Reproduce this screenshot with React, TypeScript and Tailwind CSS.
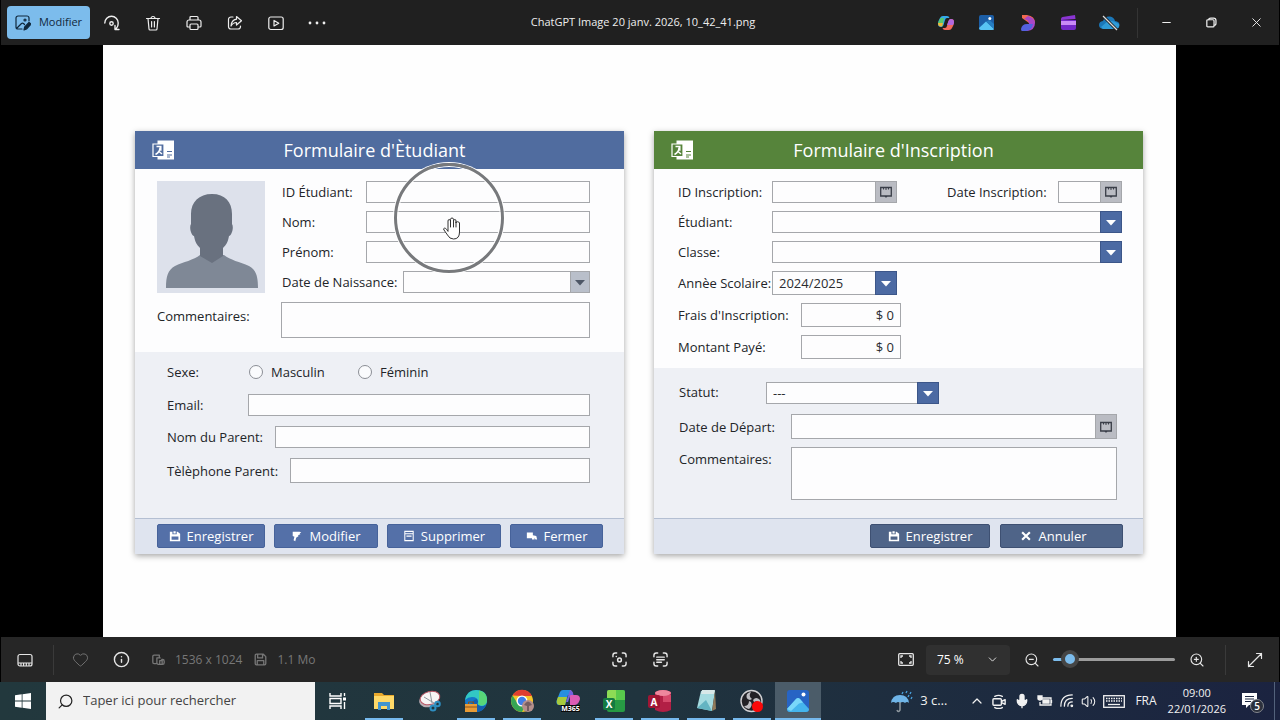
import type { ReactNode } from "react";
import { ChevronDown, ChevronUp, Info, Heart, Mic, Minus, Search, Volume2, X, ZoomIn, ZoomOut } from "lucide-react";

const FIELD = "block min-w-0 border border-[#a5a7ab] bg-[#fdfdfe] px-1.5 text-[13px] text-[#2a2c30] outline-none";

/* ---------- Champs ---------- */

function Row({ id, label, labelClass, className = "", children }: {
  id: string;
  label: string;
  labelClass: string;
  className?: string;
  children: ReactNode;
}) {
  return (
    <div className={`flex items-center ${className}`}>
      <label htmlFor={id} className={`shrink-0 whitespace-nowrap ${labelClass}`}>
        {label}
      </label>
      {children}
    </div>
  );
}

function TextField({ id, className = "h-[22px] flex-1", value = "" }: { id: string; className?: string; value?: string }) {
  return <input id={id} type="text" defaultValue={value} className={`${FIELD} ${className}`} />;
}

function SelectField({ id, options = [""], gray = false, className = "h-[22px] flex-1" }: {
  id: string;
  options?: string[];
  gray?: boolean;
  className?: string;
}) {
  return (
    <div className={`relative min-w-0 ${className}`}>
      <select id={id} className={`${FIELD} h-full w-full appearance-none`}>
        {options.map((o) => (
          <option key={o}>{o}</option>
        ))}
      </select>
      <span
        className={`pointer-events-none absolute inset-y-0 right-0 flex items-center justify-center ${
          gray ? "w-5 border border-[#a5a7ab] bg-[#b9bfca] text-[#4d5665]" : "w-[22px] border border-[#3c5689] bg-[#4c6aa3] text-white"
        }`}
      >
        <svg width="12" height="7" viewBox="0 0 12 7" fill="currentColor">
          <path d="M1 1h10L6 6.500z" />
        </svg>
      </span>
    </div>
  );
}

function DateField({ id, className = "h-[22px] flex-1" }: { id: string; className?: string }) {
  return (
    <div className={`flex min-w-0 ${className}`}>
      <input id={id} type="text" className={`${FIELD} w-full border-r-0`} />
      <button type="button" aria-label="Choisir" className="flex w-[22px] shrink-0 items-center justify-center border border-[#a5a7ab] bg-[#babcc3]">
        <svg width="12" height="12" viewBox="0 0 12 12" fill="none" stroke="#3a3e48">
          <path d="M.7 1.500h10.600v8.500H.7z" strokeWidth="1.300" />
          <path d="M3.500 1v2.500M8.500 1v2.500M5 3h2" />
          <path d="M4.500 10h3L6 12z" fill="#3a3e48" stroke="none" />
        </svg>
      </button>
    </div>
  );
}

/* ---------- Fenêtres ---------- */

function FormCard({ title, headClass, children }: { title: string; headClass: string; children: ReactNode }) {
  return (
    <form className="flex flex-col bg-[#fdfdfe] text-[13px] leading-5 text-[#222428] shadow-[0_2px_6px_rgba(0,0,0,0.35)]">
      <header className={`grid h-[38px] grid-cols-[60px_1fr_70px] items-center ${headClass}`}>
        <svg className="ml-[17px]" width="22" height="20" viewBox="0 0 22 20">
          <path d="M5.500 .5H22v19H5.500z" fill="#fff" />
          <path d="M1 4h11v12.500H1z" fill="currentColor" stroke="#fff" strokeWidth="1.200" />
          <path d="M4.500 6.500h4.300v4.300M8 7.500Q8 12 3.500 14.500M7 11.500l3 2.500" fill="none" stroke="#fff" strokeWidth="1.500" />
          <path d="M15 11.500h5M15 15h5M15 17h3" stroke="currentColor" strokeWidth="1.200" />
        </svg>
        <h2 className="text-center text-lg whitespace-nowrap text-white">{title}</h2>
      </header>
      {children}
    </form>
  );
}

function ActionButton({ label, className, children }: { label: string; className: string; children: ReactNode }) {
  return (
    <button type="button" className={`flex h-6 items-center justify-center gap-1.5 rounded-xs border text-[13px] font-medium text-white ${className}`}>
      <svg width="12" height="12" viewBox="0 0 14 14" fill="#fff">
        {children}
      </svg>
      {label}
    </button>
  );
}

const BLUE = "border-[#46629a] bg-[#5470a8]";
const SLATE = "border-[#3e5072] bg-[#4f6488]";
const SAVE_PATH = "M1 2h3v3h5V2h1l3 2.500V13H1zM5.200 1.500h2.600V4H5.200zM3 7.500v4h8v-4z";

function StudentForm() {
  return (
    <FormCard title="Formulaire d'Ètudiant" headClass="bg-[#506c9f] text-[#506c9f]">
      <div className="pt-3 pr-[34px] pb-[14px] pl-[22px]">
        <div className="flex gap-[17px]">
          <svg className="shrink-0 bg-[#dde1eb]" width="108" height="112" viewBox="0 0 108 112">
            <path d="M9 107c0-12 2-18 9-22 8-4 19-6 25-11h24c6 5 16 7 25 11 7 4 9 10 9 22z" fill="#7f8896" />
            <path d="M55 13c13 0 20 8 20 20v10c2 3 0 11-3 12-1 6-3 9-6 12v8L55 82l-12-7v-8c-3-3-5-6-6-12-3-1-5-9-3-12V33c0-12 8-20 21-20z" fill="#69717f" />
          </svg>
          <div className="flex min-w-0 flex-1 flex-col gap-2">
            <Row id="sid" label="ID Étudiant:" labelClass="w-[84px]">
              <TextField id="sid" />
            </Row>
            <Row id="nom" label="Nom:" labelClass="w-[84px]">
              <TextField id="nom" />
            </Row>
            <Row id="prenom" label="Prénom:" labelClass="w-[84px]">
              <TextField id="prenom" />
            </Row>
            <Row id="naissance" label="Date de Naissance:" labelClass="w-[121px]">
              <SelectField id="naissance" gray />
            </Row>
          </div>
        </div>
        <Row id="scom" label="Commentaires:" labelClass="w-[124px] self-start pt-1" className="mt-[9px]">
          <textarea id="scom" className={`${FIELD} h-9 flex-1 resize-none`} />
        </Row>
      </div>
      <div className="flex flex-1 flex-col gap-[10px] bg-[#eef0f5] pt-[10px] pr-[34px] pb-[35px] pl-8">
        <fieldset className="flex h-[22px] items-center">
          <legend className="float-left w-[82px]">Sexe:</legend>
          <label className="flex w-[109px] items-center gap-2">
            <input type="radio" name="sexe" className="size-[14px] appearance-none rounded-full border border-[#8b8e95] bg-[#fafbfd]" />
            Masculin
          </label>
          <label className="flex items-center gap-2">
            <input type="radio" name="sexe" className="size-[14px] appearance-none rounded-full border border-[#8b8e95] bg-[#fafbfd]" />
            Féminin
          </label>
        </fieldset>
        <Row id="email" label="Email:" labelClass="w-[81px]">
          <TextField id="email" />
        </Row>
        <Row id="parent" label="Nom du Parent:" labelClass="w-[108px]">
          <TextField id="parent" />
        </Row>
        <Row id="tel" label="Tèlèphone Parent:" labelClass="w-[123px]">
          <TextField id="tel" className="h-[25px] flex-1" />
        </Row>
      </div>
      <footer className="flex h-9 items-center gap-[9px] border-t border-[#b4bfd2] bg-[#dfe4ef] pb-0.5 pl-[22px]">
        <ActionButton label="Enregistrer" className={`w-[108px] ${BLUE}`}>
          <path fillRule="evenodd" d={SAVE_PATH} />
        </ActionButton>
        <ActionButton label="Modifier" className={`w-[104px] ${BLUE}`}>
          <path d="M2 2h8l2 1-2 1 1 1-3 1 1 1-3 2-1 4-2-1 1-4-2-1z" />
        </ActionButton>
        <ActionButton label="Supprimer" className={`w-[114px] ${BLUE}`}>
          <path fillRule="evenodd" d="M1.500 1h11v12h-11zM2.700 2.200v1.600h8.600V2.200zM2.700 5v6.800h8.600V5zM4 6.500h6V8H4z" />
        </ActionButton>
        <ActionButton label="Fermer" className={`w-[93px] ${BLUE}`}>
          <path d="M1 3h7v3l4 1 1 4h-2l-1-2v2H7V9.500H1z" />
        </ActionButton>
      </footer>
    </FormCard>
  );
}

function InscriptionForm() {
  return (
    <FormCard title="Formulaire d'Inscription" headClass="bg-[#56843b] text-[#56843b]">
      <div className="flex flex-col gap-2 pt-3 pr-[21px] pb-[9px] pl-6">
        <div className="flex justify-between">
          <Row id="iid" label="ID Inscription:" labelClass="w-[94px]">
            <DateField id="iid" className="h-[22px] w-[125px]" />
          </Row>
          <Row id="idate" label="Date Inscription:" labelClass="w-[111px]">
            <DateField id="idate" className="h-[22px] w-16" />
          </Row>
        </div>
        <Row id="etudiant" label="Étudiant:" labelClass="w-[94px]">
          <SelectField id="etudiant" />
        </Row>
        <Row id="classe" label="Classe:" labelClass="w-[94px]">
          <SelectField id="classe" />
        </Row>
        <Row id="annee" label="Annèe Scolaire:" labelClass="w-[94px]">
          <SelectField id="annee" options={["2024/2025"]} className="h-6 w-[125px]" />
        </Row>
        <Row id="frais" label="Frais d'Inscription:" labelClass="w-[123px]">
          <TextField id="frais" value="$ 0" className="h-6 w-[100px] text-right" />
        </Row>
        <Row id="montant" label="Montant Payé:" labelClass="w-[123px]">
          <TextField id="montant" value="$ 0" className="h-6 w-[100px] text-right" />
        </Row>
      </div>
      <div className="flex flex-1 flex-col bg-[#eef0f5] pt-[14px] pr-[26px] pb-[18px] pl-[25px]">
        <Row id="statut" label="Statut:" labelClass="w-[87px] self-start">
          <SelectField id="statut" options={["---"]} className="h-[22px] w-[173px]" />
        </Row>
        <Row id="depart" label="Date de Départ:" labelClass="w-28" className="mt-[10px]">
          <DateField id="depart" className="h-[25px] flex-1" />
        </Row>
        <Row id="icom" label="Commentaires:" labelClass="w-28 self-start pt-0.5" className="mt-2">
          <textarea id="icom" className={`${FIELD} h-[53px] flex-1 resize-none`} />
        </Row>
      </div>
      <footer className="flex h-9 items-center justify-end gap-[10px] border-t border-[#b4bfd2] bg-[#dfe4ef] pr-5 pb-0.5">
        <ActionButton label="Enregistrer" className={`w-[120px] ${SLATE}`}>
          <path fillRule="evenodd" d={SAVE_PATH} />
        </ActionButton>
        <ActionButton label="Annuler" className={`w-[123px] pr-4 ${SLATE}`}>
          <path d="M2.500 2.500l9 9M11.500 2.500l-9 9" stroke="#fff" strokeWidth="2.500" />
        </ActionButton>
      </footer>
    </FormCard>
  );
}

/* ---------- Visionneuse ---------- */

function IconButton({ label, className = "w-[41px]", children }: { label: string; className?: string; children: ReactNode }) {
  return (
    <button type="button" aria-label={label} className={`flex h-full shrink-0 items-center justify-center ${className}`}>
      {children}
    </button>
  );
}

function Line({ children, size = 16 }: { children: ReactNode; size?: number }) {
  return (
    <svg width={size} height={size} viewBox="0 0 16 16" fill="none" stroke="currentColor" strokeWidth="1.200" strokeLinecap="round" strokeLinejoin="round">
      {children}
    </svg>
  );
}

function TopBar() {
  return (
    <header className="flex h-[45px] border-x border-black bg-[#202020] text-[#eeeeee]">
      <div className="flex flex-1 items-center pl-1.5">
        <button type="button" className="mr-px flex h-[33px] w-[83px] items-center justify-center gap-2 rounded bg-[#7cbcec] text-[11px] text-[#10283c]">
          <Line>
            <path d="M14 6V3a2 2 0 0 0-2-2H3a2 2 0 0 0-2 2v9a2 2 0 0 0 2 2h4M2 13l4.500-4.500a1.500 1.500 0 0 1 2 0L9.500 9.500" />
            <circle cx="10" cy="5" r="1" />
            <path d="M9 15l.7-3L14 7.500 16 9l-4.500 5z" fill="currentColor" />
          </Line>
          Modifier
        </button>
        <IconButton label="Faire pivoter">
          <Line>
            <path d="M.8 8A6.700 6.700 0 0 1 14.200 8Q14.500 11 12 14M11 10.500v4h4" strokeWidth="1.400" />
            <circle cx="7.500" cy="8.500" r="1.700" strokeWidth="1.400" />
          </Line>
        </IconButton>
        <IconButton label="Supprimer l'image">
          <Line>
            <path d="M1.500 3.500h13M3 3.500l1 10.500q.1 1 1 1h6q.9 0 1-1l1-10.500M6 3.500a2 2 0 0 1 4 0M6.600 6.500v5.500M9.400 6.500v5.500" />
          </Line>
        </IconButton>
        <IconButton label="Imprimer">
          <Line>
            <path d="M4 5V2.500q0-1 1-1h6q1 0 1 1V5M4 12H2q-1 0-1-1V7a2 2 0 0 1 2-2h10a2 2 0 0 1 2 2v4q0 1-1 1h-2M5 9h6q1 0 1 1v3.500q0 1-1 1H5q-1 0-1-1V10q0-1 1-1z" />
          </Line>
        </IconButton>
        <IconButton label="Partager">
          <Line>
            <path d="M6 2H4a2.500 2.500 0 0 0-2.500 2.500v7A2.500 2.500 0 0 0 4 14h7a2.500 2.500 0 0 0 2.500-2.500V11M9.500 1.500l5 4.200-5 4.300V7.500Q6 7.500 4 11q.5-6 5.500-6.800z" />
          </Line>
        </IconButton>
        <IconButton label="Diaporama">
          <Line>
            <rect x=".8" y="2" width="14.400" height="12.500" rx="2" />
            <path d="M6 5.500v5.500l4.800-2.700z" />
          </Line>
        </IconButton>
        <IconButton label="Plus">
          <svg width="18" height="4" viewBox="0 0 18 4" fill="currentColor">
            <circle cx="2" cy="2" r="1.400" />
            <circle cx="9" cy="2" r="1.400" />
            <circle cx="16" cy="2" r="1.400" />
          </svg>
        </IconButton>
      </div>
      <h1 className="self-center text-[11px] whitespace-nowrap">ChatGPT Image 20 janv. 2026, 10_42_41.png</h1>
      <div className="flex flex-1 items-center justify-end">
        <IconButton label="Copilot">
          <svg width="16" height="16" viewBox="0 0 16 16">
            <path d="M5 1h4q2 0 2.500 2H9Q7.500 3 7 5L5.500 10Q5 12 3 12 0 12 0 9q0-3 2-6 .8-2 3-2z" fill="#35a9ea" />
            <path d="M1 6q1-3 2-3h3L4.500 11H3Q0 11 0 8z" fill="#58c96b" />
            <path d="M0 8h5l-1 3.500H3Q0 11.500 0 8z" fill="#f0b63a" />
            <path d="M11 15H7q-2 0-2.500-2H7q1.500 0 2-2l1.500-5Q11 4 13 4q3 0 3 3t-2 6q-.8 2-3 2z" fill="#f2695c" />
            <path d="M10.500 6Q11 4 13 4q3 0 3 3 0 2-1 3H9z" fill="#b268e0" />
          </svg>
        </IconButton>
        <IconButton label="Photos">
          <svg width="15" height="15" viewBox="0 0 15 15">
            <rect width="15" height="15" rx="2" fill="#1c5ea6" />
            <path d="M0 13l7-6.500L15 14q0 1-2 1H2q-2 0-2-2z" fill="#58c4f4" />
            <path d="M7 6.500L15 14V9l-4.500-4z" fill="#267ec2" />
            <circle cx="10.800" cy="3.500" r="1.500" fill="#fff" />
          </svg>
        </IconButton>
        <IconButton label="Designer">
          <svg width="16" height="16" viewBox="0 0 16 16">
            <path d="M2 0h5q8 1 8 8H9L2 3z" fill="#f26a50" />
            <path d="M8 1q7 2 7 7 0 7-8 8H4q5-4 5-7Q9 5 4 4z" fill="#a846c8" />
            <path d="M1 14q1-5 6-5h6q-1 6-7 7H2q-1 0-1-2z" fill="#5361e0" />
          </svg>
        </IconButton>
        <IconButton label="Clipchamp">
          <svg width="15" height="15" viewBox="0 0 15 15">
            <path d="M0 4q0-1.500 1.500-2L14 0l.5 4L0 5z" fill="#8a35d2" />
            <path d="M0 5h15v8q0 2-2 2H2q-2 0-2-2z" fill="#7428c8" />
            <path d="M0 6h15v4H0z" fill="#c98af6" />
          </svg>
        </IconButton>
        <IconButton label="OneDrive">
          <svg width="21" height="16" viewBox="0 0 21 16">
            <path d="M4 14q-4-.5-4-4t4-4Q6 1 11 1.500q4 .5 5 4.500 4.500.5 4.500 4t-4 4z" fill="#1b77b8" />
            <path d="M2 12l7-6q5-1 11 3 1 5-4 5H4z" fill="#2f9ad6" />
            <path d="M4 1l14 14" stroke="#202020" strokeWidth="3" />
            <path d="M4 1l14 14" stroke="#ddd" strokeWidth="1.200" />
          </svg>
        </IconButton>
        <span className="mr-1.5 ml-[7px] h-[30px] w-px bg-[#343434]" />
        <IconButton label="Réduire" className="w-[45px]">
          <Minus size={13} strokeWidth={2} />
        </IconButton>
        <IconButton label="Niveau inférieur" className="w-[45px]">
          <Line size={11}>
            <rect x="1.200" y="4" width="10.500" height="10.500" rx="1.500" strokeWidth="1.800" />
            <path d="M4 4q0-2.500 3-2.500h4q3.500 0 3.500 3.500v4q0 3-2.500 3" strokeWidth="1.800" />
          </Line>
        </IconButton>
        <IconButton label="Fermer la fenêtre" className="w-[45px]">
          <X size={15} strokeWidth={1.5} />
        </IconButton>
      </div>
    </header>
  );
}

function ViewerBar() {
  return (
    <footer className="flex h-[45px] items-center border-x border-black bg-[#262626] text-[#e6e6e6]">
      <div className="flex h-full flex-1 items-center">
        <IconButton label="Pellicule" className="w-12">
          <Line>
            <rect x="1" y="2.500" width="14" height="11.500" rx="2" />
            <path d="M1.500 11h13M4 11.500v2M6.600 11.500v2M9.300 11.500v2M12 11.500v2" />
          </Line>
        </IconButton>
        <span className="mr-[6px] ml-1 h-[30px] w-px bg-[#3a3a3a]" />
        <IconButton label="Favori">
          <Heart size={17} strokeWidth={1.3} className="text-[#777777]" />
        </IconButton>
        <IconButton label="Informations">
          <Info size={17} strokeWidth={2} />
        </IconButton>
        <div className="ml-[10px] flex items-center gap-[10px] text-xs text-[#777777]">
          <Line size={13}>
            <path d="M5 13H2.500q-1.500 0-1.500-1.500V4q0-1.500 1.500-1.500H9v3M6 6h4M12 8h1q2 0 2 2v2q0 2-2 2H8q-2 0-2-2V6M9.500 14V9.500h3V14" strokeWidth="1.600" />
          </Line>
          1536 x 1024
        </div>
        <div className="ml-3 flex items-center gap-[10px] text-xs text-[#777777]">
          <Line size={13}>
            <path d="M1.500 3q0-1.500 1.500-1.500h8.500l3 3V13q0 1.500-1.500 1.500H3q-1.500 0-1.500-1.500zM4.500 2v4h6V2M4 14V9.500h8V14" strokeWidth="1.600" />
          </Line>
          1.1 Mo
        </div>
      </div>
      <IconButton label="Recherche visuelle">
        <Line size={15}>
          <path d="M1 5V3.500Q1 1 3.500 1H5M11 1h1.500Q15 1 15 3.500V5M15 11v1.500q0 2.500-2.500 2.500H11M5 15H3.500Q1 15 1 12.500V11" strokeWidth="1.500" />
          <circle cx="8" cy="8.500" r="2" strokeWidth="1.600" />
          <path d="M4.500 4.800h.1" strokeWidth="1.600" />
        </Line>
      </IconButton>
      <IconButton label="Numériser le texte">
        <Line size={15}>
          <path d="M1 5V3.500Q1 1 3.500 1H5M11 1h1.500Q15 1 15 3.500V5M15 11v1.500q0 2.500-2.500 2.500H11M5 15H3.500Q1 15 1 12.500V11M4 5.500h8M4 8.200h8M4 11h5" strokeWidth="1.500" />
        </Line>
      </IconButton>
      <div className="flex h-full flex-1 items-center justify-end">
        <IconButton label="Ajuster">
          <svg width="16" height="13" viewBox="0 0 16 13" fill="none" stroke="currentColor" strokeWidth="1.300">
            <rect x=".7" y=".7" width="14.600" height="11.600" rx="1" />
            <path d="M3 5V3h2M11 3h2v2M13 8v2h-2M5 10H3V8" />
          </svg>
        </IconButton>
        <button type="button" className="flex h-[30px] w-[84px] items-center justify-between rounded bg-[#303030] px-[11px] text-xs text-white">
          75 %
          <ChevronDown size={13} strokeWidth={1.5} />
        </button>
        <IconButton label="Zoom arrière" className="w-[43px]">
          <ZoomOut size={16} strokeWidth={1.7} />
        </IconButton>
        <input
          type="range"
          aria-label="Zoom"
          defaultValue={8}
          className="h-[18px] w-[122px] appearance-none bg-transparent [&::-webkit-slider-runnable-track]:h-[3px] [&::-webkit-slider-runnable-track]:rounded-full [&::-webkit-slider-runnable-track]:bg-[linear-gradient(to_right,#7cbcec_14%,#9c9c9c_14%)] [&::-webkit-slider-thumb]:-mt-[8px] [&::-webkit-slider-thumb]:size-[18px] [&::-webkit-slider-thumb]:appearance-none [&::-webkit-slider-thumb]:rounded-full [&::-webkit-slider-thumb]:border-4 [&::-webkit-slider-thumb]:border-[#454545] [&::-webkit-slider-thumb]:bg-[#7cbcec]"
        />
        <IconButton label="Zoom avant" className="w-[43px]">
          <ZoomIn size={16} strokeWidth={1.7} />
        </IconButton>
        <span className="mr-1 ml-[7px] h-[30px] w-px bg-[#3a3a3a]" />
        <IconButton label="Plein écran" className="w-[49px]">
          <Line>
            <path d="M9.500 1.500h5v5M14.500 1.500l-13 13M1.500 9.500v5h5" />
          </Line>
        </IconButton>
      </div>
    </footer>
  );
}

/* ---------- Barre des tâches ---------- */

function TaskButton({ label, open = true, active = false, children }: { label: string; open?: boolean; active?: boolean; children: ReactNode }) {
  return (
    <button
      type="button"
      aria-label={label}
      className={`flex h-full w-[46px] shrink-0 flex-col items-center justify-between pt-[7px] ${active ? "bg-[#4b5c69]" : ""}`}
    >
      <svg width="24" height="24" viewBox="0 0 24 24">
        {children}
      </svg>
      {open && <span className={`h-0.5 bg-[#76b9ed] ${active ? "w-full" : "w-[38px]"}`} />}
    </button>
  );
}

function Taskbar() {
  return (
    <nav className="flex h-[38px] items-center bg-linear-to-r from-[#22383d] via-[#20343e] to-[#1b2340] text-[#f2f2f2]">
      <button type="button" aria-label="Démarrer" className="flex w-[46px] shrink-0 justify-center">
        <svg width="16" height="16" viewBox="0 0 16 16" fill="#fff">
          <path d="M0 2.300l6.700-1v6.300H0zM7.500 1.200L16 0v7.600H7.500zM0 8.400h6.700v6.300l-6.700-1zM7.500 8.400H16V16l-8.500-1.200z" />
        </svg>
      </button>
      <div className="flex h-full w-[269px] shrink-0 items-center gap-[9px] bg-[#f2f2f2] pl-[11px] text-[#3a3a3a]">
        <Search size={17} strokeWidth={1.7} className="-scale-x-100 text-[#222222]" />
        <input type="search" aria-label="Rechercher" placeholder="Taper ici pour rechercher" className="min-w-0 flex-1 bg-transparent text-[13px] outline-none placeholder:text-[#444444]" />
      </div>
      <TaskButton label="Vue des tâches" open={false}>
        <path d="M4 4v3h11V4M4 20v-3h11v3M4 9.500h11v5H4zM18.500 4v3M18.500 13v7" fill="none" stroke="#fff" strokeWidth="1.400" />
        <path d="M17 8.500h3v3h-3z" fill="#fff" />
      </TaskButton>
      <TaskButton label="Explorateur de fichiers">
        <path d="M2 4h8l2 2h10v14H2z" fill="#e9a92c" />
        <path d="M2 7h20v13H2z" fill="#ffd968" />
        <path d="M6 13h12v8h-3v-4H9v4H6z" fill="#4295cf" />
      </TaskButton>
      <TaskButton label="Outil Capture" open={false}>
        <ellipse cx="11" cy="11" rx="10" ry="7" fill="#b9aeb4" transform="rotate(-18 11 11)" />
        <ellipse cx="12" cy="9" rx="10" ry="6.500" fill="#f7f4f5" stroke="#b95565" transform="rotate(-14 12 9)" />
        <path d="M12 3l2 11M6 8l10 6" stroke="#8d959c" />
        <g fill="none" stroke="#2e8fc2" strokeWidth="2">
          <circle cx="15" cy="19" r="2.500" />
          <circle cx="19.500" cy="15" r="2.300" />
        </g>
      </TaskButton>
      <TaskButton label="Edge">
        <circle cx="12" cy="12" r="11" fill="#1476c8" />
        <path d="M1 11Q3 1 12 1q11 0 11 10 0 6-6 6-5-1-3-4 0-5-6-5-4 0-7 3z" fill="#32c8c4" />
        <path d="M15 1.500q8 2 8 9 0 6-6 6-4-1-2-4z" fill="#58d678" />
        <path d="M14 13q-2 3 3 4 3 .5 5-1-3 7-10 7-5-1-5-7 1-5 6-6z" fill="#155fae" />
        <path d="M1 15h12v8H1z" fill="#e89b36" />
        <path d="M4.500 15v-2h5v2M1 18h12" fill="none" stroke="#8b521a" />
      </TaskButton>
      <TaskButton label="Chrome">
        <circle cx="12" cy="12" r="11" fill="#f5c529" />
        <path d="M2.500 6.500A11 11 0 0 1 22 7H12z" fill="#df3e30" />
        <path d="M2.500 6.500A11 11 0 0 0 12 23l4-8H8z" fill="#35a553" />
        <circle cx="12" cy="12" r="5.500" fill="#fff" />
        <circle cx="12" cy="12" r="4.200" fill="#3f7ee8" />
        <circle cx="18" cy="17" r="6" fill="#b48f8c" />
        <path d="M14 16q4-7 8 0l-3 1v5h-2v-5z" fill="#755d61" />
      </TaskButton>
      <TaskButton label="Microsoft 365 Copilot" open={false}>
        <path d="M7 1h7q2 0 1.500 3L14 6h-2L9 16H3q-3 0-2.500-4L4 3q1-2 3-2z" fill="#278fe0" />
        <path d="M2 8h9L9 16H3q-4-1-1-8z" fill="#a8ca3c" />
        <path d="M14 1q3 1 3 5h3q4 0 4 4-1 5-5 6h-5z" fill="#dd5cb5" />
        <path d="M14 1q3 1 3.500 5h-3L12 13h-2l3-9z" fill="#7361df" />
        <rect x="5" y="16" width="19" height="7" fill="#0a0a0a" />
        <text x="14.500" y="22" textAnchor="middle" fontSize="7" fontWeight="700" fill="#fff">M365</text>
      </TaskButton>
      <TaskButton label="Excel">
        <rect x="5" y="1" width="18" height="22" rx="2" fill="#279a44" />
        <path d="M7 1h7v10H5V3q0-2 2-2z" fill="#8ddb55" />
        <path d="M14 1h7q2 0 2 2v8h-9z" fill="#58c94c" />
        <rect x="1" y="9" width="12" height="12" rx="2" fill="#147a41" />
        <text x="7" y="18.500" textAnchor="middle" fontSize="10" fontWeight="700" fill="#fff">X</text>
      </TaskButton>
      <TaskButton label="Access">
        <path d="M7 3q8-4 16 0v18q-8 4-16 0z" fill="#b21f45" />
        <path d="M15 6h8v7h-8z" fill="#d6486a" />
        <ellipse cx="15" cy="4" rx="8" ry="3" fill="#ee879d" />
        <rect x="0" y="6" width="12" height="13" rx="2" fill="#a01634" />
        <text x="6" y="16.500" textAnchor="middle" fontSize="10" fontWeight="700" fill="#fff">A</text>
      </TaskButton>
      <TaskButton label="Bloc-notes">
        <path d="M7 2h14l-3 20-15-3z" fill="#a5dbe0" />
        <path d="M8 1h13l-1 4H7z" fill="#d8e8e8" />
        <path d="M21 2l1 18-4 2z" fill="#917b5b" />
        <path d="M3 19l9-8 6 11z" fill="#64b4c2" />
      </TaskButton>
      <TaskButton label="OBS Studio">
        <circle cx="11.500" cy="12" r="10.500" fill="#222126" stroke="#d0d0d3" strokeWidth="1.400" />
        <path d="M10 11Q5 10 7 5q2-2 4-2-3 4 1 7zM13 11q3-4 7 0 1 2 0 4-2-4-6-2zM11 13q2 4-2 7-3 0-5-3 5 0 5-5z" fill="#bdbdc2" />
        <circle cx="17.500" cy="17.500" r="5.500" fill="#fb0909" />
      </TaskButton>
      <TaskButton label="Photos, fenêtre active" active>
        <rect x="1" y="1" width="22" height="22" rx="3" fill="#2764c4" />
        <path d="M1 20l9-10q2-2 4 0l9 10q0 3-3 3H4q-3 0-3-3z" fill="#45b5ed" />
        <path d="M1 20l9-10q2-2 4 0l3 3.500-4 1L5 22z" fill="#79d7fa" />
        <circle cx="17.500" cy="5.500" r="2" fill="#fff" />
      </TaskButton>

      <div className="ml-auto flex h-full items-center">
        <button type="button" className="flex items-center gap-[7px] pr-[22px] text-[13px]">
          <svg width="23" height="23" viewBox="0 0 23 23">
            <path d="M1 13Q2 5 10 5t9 8q-2-2-4 0-2-2-5 0-2-2-4 0-3-2-5 0z" fill="#6fb5e8" />
            <path d="M10 12v8q-2 3-3 0" fill="none" stroke="#8e989f" strokeWidth="1.500" />
            <path d="M13 2l-1 2M17 1l-1 2M21 2l-1 2M19 5l-1 2M22 7l-1 2" stroke="#4aa2df" strokeWidth="1.300" />
          </svg>
          3 c…
        </button>
        <div className="flex items-center gap-[7px]">
          <ChevronUp size={16} strokeWidth={1.8} />
          <Line size={15}>
            <path d="M2 5h7q1 0 1 1v5q0 1-1 1H2q-1 0-1-1V6q0-1 1-1zM10 8l4-2v5l-4-2M3 2.500q4-2 8 0M3 14.500q4 2 8 0" strokeWidth="1.500" />
          </Line>
          <Mic size={16} strokeWidth={2} fill="currentColor" />
          <svg width="16" height="12" viewBox="0 0 16 12" fill="none" stroke="currentColor" strokeWidth="1.300">
            <path d="M5 3h9v7H3V7" />
            <path d="M6 5h6v3H6zM14.500 5v3M1 1v3q2 2 4 0V1z" fill="currentColor" />
          </svg>
          <Line size={14}>
            <path d="M1 14Q1 1 14 1M5 14q0-9 9-9M9 14q0-5 5-5" strokeWidth="1.400" />
            <circle cx="13.500" cy="13.500" r="1" fill="currentColor" />
          </Line>
          <Volume2 size={15} strokeWidth={1.7} />
          <svg width="22" height="13" viewBox="0 0 22 13" fill="none" stroke="currentColor">
            <rect x=".7" y=".7" width="20.600" height="11.600" strokeWidth="1.300" />
            <path d="M3 3.500h16M3 6h16" strokeDasharray="1.500 1" strokeWidth="1.300" />
            <path d="M5 9.500h12" strokeWidth="1.300" />
          </svg>
        </div>
        <span className="ml-[10px] text-xs">FRA</span>
        <div className="ml-[11px] text-center text-[11px] leading-4">
          <div>09:00</div>
          <div>22/01/2026</div>
        </div>
        <button type="button" aria-label="Notifications" className="relative mr-[9px] ml-[15px] size-6">
          <svg width="24" height="24" viewBox="0 0 24 24">
            <path d="M1 4h15v12H8l-3 3v-3H1z" fill="#fff" />
            <path d="M4 7.500h9M4 10h9M4 12.500h6" stroke="#1d2842" />
            <circle cx="16" cy="17" r="6.500" fill="#2b303c" stroke="#85888f" />
            <text x="16" y="20.500" textAnchor="middle" fontSize="10" fontWeight="600" fill="#fff">5</text>
          </svg>
        </button>
        <span className="mr-[5px] h-full w-px bg-[#53627b]" />
      </div>
    </nav>
  );
}

export default function App() {
  return (
    <div className="flex min-h-screen flex-col bg-black font-['Open_Sans','Noto_Sans',sans-serif]">
      <TopBar />
      <main className="relative flex flex-1 flex-col pr-[104px] pl-[103px]">
        <div className="grid flex-1 grid-cols-2 items-start gap-[30px] bg-[#fefefe] pt-[86px] pr-[33px] pb-[83px] pl-8">
          <StudentForm />
          <InscriptionForm />
        </div>
        {/* Halo autour du curseur */}
        <div className="pointer-events-none absolute top-[118px] left-[394px] flex size-[110px] items-center justify-center rounded-full border-3 border-[#77797c] inset-ring inset-ring-white ring ring-white">
          <svg className="mt-5 ml-1.5" width="18" height="23" viewBox="0 0 18 23" fill="#fff" stroke="#333" strokeLinejoin="round" strokeLinecap="round">
            <path d="M5 14V4q0-1.500 1.200-1.500T7.500 4V2.500Q7.500 1 9 1t1.500 1.500V4q0-1.500 1.300-1.500T13 4v2q0-1.300 1.500-1.300T16.500 6v9q0 7-6 7-4 0-6-4l-3.500-5q-1-1.500.3-1.800 1-.3 2 .8z" />
            <path d="M7.500 4v6M10.500 4v6M13 5v5" fill="none" />
          </svg>
        </div>
      </main>
      <ViewerBar />
      <Taskbar />
    </div>
  );
}
